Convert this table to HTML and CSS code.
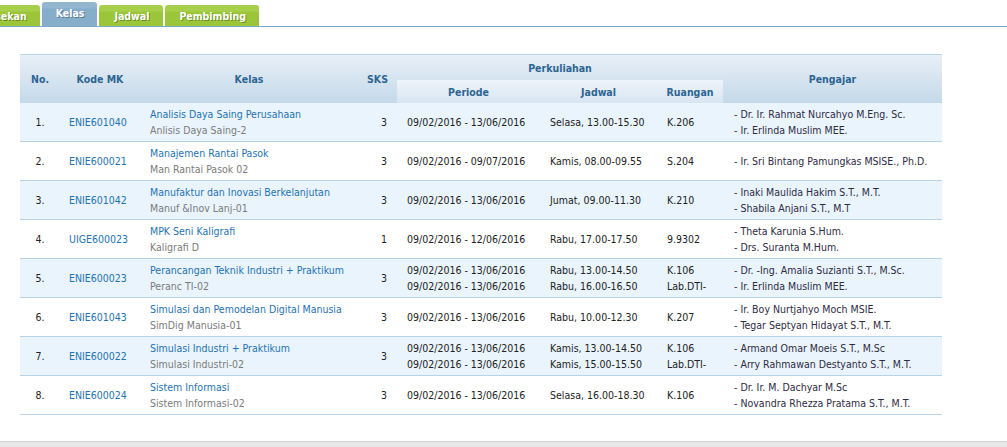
FILE: index.html
```html
<!DOCTYPE html>
<html>
<head>
<meta charset="utf-8">
<link rel="stylesheet" href="styles.css">
</head>
<body>
<div class="page">
  <div class="tabbar">
    <div class="tab tab-first">Pengecekan</div>
    <div class="tab tab-active">Kelas</div>
    <div class="tab tab-wide">Jadwal</div>
    <div class="tab">Pembimbing</div>
  </div>

  <table class="grid">
    <colgroup>
      <col class="c-no"><col class="c-kode"><col class="c-kelas"><col class="c-sks">
      <col class="c-periode"><col class="c-jadwal"><col class="c-ruang"><col class="c-pengajar">
    </colgroup>
    <thead>
      <tr class="h1">
        <th rowspan="2">No.</th>
        <th rowspan="2">Kode MK</th>
        <th rowspan="2">Kelas</th>
        <th rowspan="2">SKS</th>
        <th colspan="3" class="group">Perkuliahan</th>
        <th rowspan="2">Pengajar</th>
      </tr>
      <tr class="h2">
        <th class="sub">Periode</th>
        <th class="sub">Jadwal</th>
        <th class="sub">Ruangan</th>
      </tr>
    </thead>
    <tbody>
      <tr class="odd">
        <td class="no">1.</td>
        <td class="kode"><a>ENIE601040</a></td>
        <td class="kelas"><div class="link">Analisis Daya Saing Perusahaan</div><div class="sub-name">Anlisis Daya Saing-2</div></td>
        <td class="sks">3</td>
        <td class="txt">09/02/2016 - 13/06/2016</td>
        <td class="txt">Selasa, 13.00-15.30</td>
        <td class="txt">K.206</td>
        <td class="peng"><div>- Dr. Ir. Rahmat Nurcahyo M.Eng. Sc.</div><div>- Ir. Erlinda Muslim MEE.</div></td>
      </tr>
      <tr>
        <td class="no">2.</td>
        <td class="kode"><a>ENIE600021</a></td>
        <td class="kelas"><div class="link">Manajemen Rantai Pasok</div><div class="sub-name">Man Rantai Pasok 02</div></td>
        <td class="sks">3</td>
        <td class="txt">09/02/2016 - 09/07/2016</td>
        <td class="txt">Kamis, 08.00-09.55</td>
        <td class="txt">S.204</td>
        <td class="peng"><div>- Ir. Sri Bintang Pamungkas MSISE., Ph.D.</div></td>
      </tr>
      <tr class="odd">
        <td class="no">3.</td>
        <td class="kode"><a>ENIE601042</a></td>
        <td class="kelas"><div class="link">Manufaktur dan Inovasi Berkelanjutan</div><div class="sub-name">Manuf &amp;Inov Lanj-01</div></td>
        <td class="sks">3</td>
        <td class="txt">09/02/2016 - 13/06/2016</td>
        <td class="txt">Jumat, 09.00-11.30</td>
        <td class="txt">K.210</td>
        <td class="peng"><div>- Inaki Maulida Hakim S.T., M.T.</div><div>- Shabila Anjani S.T., M.T</div></td>
      </tr>
      <tr>
        <td class="no">4.</td>
        <td class="kode"><a>UIGE600023</a></td>
        <td class="kelas"><div class="link">MPK Seni Kaligrafi</div><div class="sub-name">Kaligrafi D</div></td>
        <td class="sks">1</td>
        <td class="txt">09/02/2016 - 12/06/2016</td>
        <td class="txt">Rabu, 17.00-17.50</td>
        <td class="txt">9.9302</td>
        <td class="peng"><div>- Theta Karunia S.Hum.</div><div>- Drs. Suranta M.Hum.</div></td>
      </tr>
      <tr class="odd">
        <td class="no">5.</td>
        <td class="kode"><a>ENIE600023</a></td>
        <td class="kelas"><div class="link">Perancangan Teknik Industri + Praktikum</div><div class="sub-name">Peranc TI-02</div></td>
        <td class="sks">3</td>
        <td class="txt"><div>09/02/2016 - 13/06/2016</div><div>09/02/2016 - 13/06/2016</div></td>
        <td class="txt"><div>Rabu, 13.00-14.50</div><div>Rabu, 16.00-16.50</div></td>
        <td class="txt"><div>K.106</div><div>Lab.DTI-</div></td>
        <td class="peng"><div>- Dr. -Ing. Amalia Suzianti S.T., M.Sc.</div><div>- Ir. Erlinda Muslim MEE.</div></td>
      </tr>
      <tr>
        <td class="no">6.</td>
        <td class="kode"><a>ENIE601043</a></td>
        <td class="kelas"><div class="link">Simulasi dan Pemodelan Digital Manusia</div><div class="sub-name">SimDig Manusia-01</div></td>
        <td class="sks">3</td>
        <td class="txt">09/02/2016 - 13/06/2016</td>
        <td class="txt">Rabu, 10.00-12.30</td>
        <td class="txt">K.207</td>
        <td class="peng"><div>- Ir. Boy Nurtjahyo Moch MSIE.</div><div>- Tegar Septyan Hidayat S.T., M.T.</div></td>
      </tr>
      <tr class="odd">
        <td class="no">7.</td>
        <td class="kode"><a>ENIE600022</a></td>
        <td class="kelas"><div class="link">Simulasi Industri + Praktikum</div><div class="sub-name">Simulasi Industri-02</div></td>
        <td class="sks">3</td>
        <td class="txt"><div>09/02/2016 - 13/06/2016</div><div>09/02/2016 - 13/06/2016</div></td>
        <td class="txt"><div>Kamis, 13.00-14.50</div><div>Kamis, 15.00-15.50</div></td>
        <td class="txt"><div>K.106</div><div>Lab.DTI-</div></td>
        <td class="peng"><div>- Armand Omar Moeis S.T., M.Sc</div><div>- Arry Rahmawan Destyanto S.T., M.T.</div></td>
      </tr>
      <tr>
        <td class="no">8.</td>
        <td class="kode"><a>ENIE600024</a></td>
        <td class="kelas"><div class="link">Sistem Informasi</div><div class="sub-name">Sistem Informasi-02</div></td>
        <td class="sks">3</td>
        <td class="txt">09/02/2016 - 13/06/2016</td>
        <td class="txt">Selasa, 16.00-18.30</td>
        <td class="txt">K.106</td>
        <td class="peng"><div>- Dr. Ir. M. Dachyar M.Sc</div><div>- Novandra Rhezza Pratama S.T., M.T.</div></td>
      </tr>
    </tbody>
  </table>

  <div class="footer"></div>
</div>
</body>
</html>
```

FILE: styles.css
```css
html, body {
  margin: 0;
  padding: 0;
  background: #ffffff;
  overflow: hidden;
}

.page {
  font-family: "DejaVu Sans Condensed", "DejaVu Sans", sans-serif;
  font-stretch: condensed;
  font-size: 10.5px;
  color: #222222;
  overflow: hidden;
}

/* Tabs */
.tabbar {
  display: flex;
  align-items: flex-end;
  gap: 2px;
  height: 26px;
  border-bottom: 1px solid #7fa8c6;
  margin-left: -52px;
}

.tab {
  height: 21px;
  line-height: 22px;
  padding: 0 13px 0 14px;
  border-radius: 3px 3px 0 0;
  background: linear-gradient(#a8cf4c 0, #a8cf4c 6px, #9cc63a 7px, #9cc63a 100%);
  color: #ffffff;
  font-weight: bold;
  font-size: 10.5px;
  text-shadow: 1px 1px 0 rgba(70, 90, 20, 0.55);
  white-space: nowrap;
}

.tab-wide {
  padding: 0 14px 0 15px;
}

.tab-active {
  height: 24px;
  line-height: 22px;
  background: linear-gradient(#93b6d1 0, #93b6d1 6px, #86adca 7px, #86adca 100%);
  text-shadow: 1px 1px 0 rgba(40, 70, 100, 0.5);
}

/* Table */
.grid {
  margin: 27px 0 0 20px;
  width: 922px;
  table-layout: fixed;
  border-collapse: collapse;
  border-top: 1px solid #b9d5ea;
}

.c-no { width: 40px; }
.c-kode { width: 80px; }
.c-kelas { width: 218px; }
.c-sks { width: 39px; }
.c-periode { width: 143px; }
.c-jadwal { width: 117px; }
.c-ruang { width: 66px; }
.c-pengajar { width: 219px; }

.grid thead {
  background: linear-gradient(#e7eff7, #c5d9e9);
}

.grid th {
  font-weight: bold;
  font-size: 10.5px;
  color: #2d6592;
  text-align: center;
  vertical-align: middle;
  padding: 0;
}

.h1 { height: 25px; }
.h2 { height: 23px; }

.grid th.group {
  vertical-align: middle;
  padding-top: 1px;
}

.grid th.sub {
  background: linear-gradient(#edf4fa, #d8e6f2);
  padding-top: 1px;
}

.grid tbody tr {
  height: 39px;
  border-bottom: 1px solid #b7d4eb;
}

.grid tbody tr.odd {
  background: #eaf4fd;
}

.grid td {
  padding: 3px 0 3px 10px;
  line-height: 16px;
  vertical-align: middle;
  white-space: nowrap;
  overflow: hidden;
}

.grid td.no {
  text-align: center;
  padding-left: 0;
}

.grid td.kode {
  padding-left: 9px;
}

.grid td.kode a,
.link {
  color: #1f73b2;
}

.sub-name {
  color: #7b7b7b;
}

.grid td.sks {
  text-align: right;
  padding: 3px 10px 3px 0;
}

.grid td.txt {
  color: #222222;
}

.grid td.peng {
  padding-left: 11px;
  color: #2f2b44;
}

/* Footer */
.footer {
  margin-top: 26px;
  height: 40px;
  border-top: 1px solid #d3d3d3;
  background: #e8e8e8;
}
```
